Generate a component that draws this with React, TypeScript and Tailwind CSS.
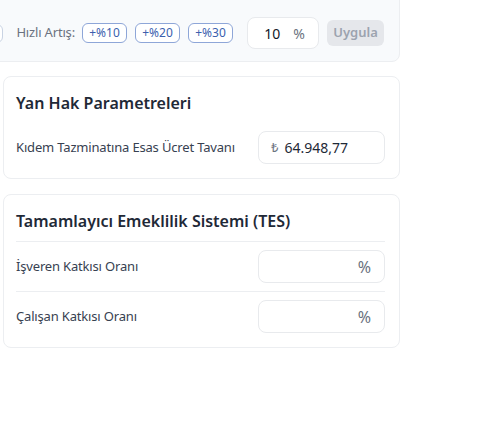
import React from 'react';

const font = { fontFamily: '"Noto Sans", "Liberation Sans", sans-serif' };

const chips = ['+%10', '+%20', '+%30'];

const PercentInput = () => (
    <div className="w-[127px] h-[33px] rounded-lg border border-[#e8eaed] bg-white flex items-center justify-end pr-[13px] shrink-0">
        <span className="text-[16px] text-[#6b7280]">%</span>
    </div>
);

export default function App() {
    return (
        <div className="min-h-[430px] bg-white overflow-hidden" style={font}>
            <div className="w-[397px] ml-[3px] flex flex-col">
                {/* quick raise bar, scrolled partly out of view */}
                <div className="-ml-[60px] w-[457px] -mt-[20px] pt-[36px] pb-[12px] pr-[15px] rounded-lg border border-[#eceef1] bg-[#f8fafc] flex items-center justify-end whitespace-nowrap">
                    <div className="w-[40px] h-[19px] rounded-md border border-[#c9d3e3] bg-white mr-[13px] shrink-0" />
                    <span className="text-[13px] tracking-[-0.17px] text-[#6b7280] mr-[7px] shrink-0">Hızlı Artış:</span>
                    <div className="flex gap-2 mr-[14px] shrink-0">
                        {chips.map(c => (
                            <button key={c} className="h-[20px] w-[45px] rounded-md border border-[#8ea6d8] bg-white text-[12px] text-[#3b5fae] leading-none">{c}</button>
                        ))}
                    </div>
                    <div className="w-[72px] h-[32px] rounded-lg border border-[#e8eaed] bg-white flex items-center justify-end pr-[13px] gap-[13px] mr-[8px] shrink-0">
                        <span className="text-[14px] text-[#111827]">10</span>
                        <span className="text-[14px] text-[#6b7280]">%</span>
                    </div>
                    <button className="w-[57px] h-[26px] rounded-md bg-[#e5e7eb] text-[13px] font-semibold text-[#9ca3af] shrink-0">Uygula</button>
                </div>

                <div className="mt-[14px] rounded-lg border border-[#eceef1] bg-white pt-[14px] pb-[14px] pl-[12px] pr-[14px]">
                    <h3 className="text-[16px] leading-6 font-semibold text-[#1f2937] mb-4">Yan Hak Parametreleri</h3>
                    <div className="flex items-center justify-between">
                        <span className="text-[13px] tracking-[-0.17px] text-[#374151]">Kıdem Tazminatına Esas Ücret Tavanı</span>
                        <div className="w-[127px] h-[33px] rounded-lg border border-[#e8eaed] bg-white flex items-center pl-[12px] gap-[6px]">
                            <span className="text-[13px] text-[#6b7280]">₺</span>
                            <span className="text-[14px] text-[#1f2937]">64.948,77</span>
                        </div>
                    </div>
                </div>

                <div className="mt-[15px] rounded-lg border border-[#eceef1] bg-white pt-[14px] pb-[14px] pl-[12px] pr-[14px]">
                    <h3 className="text-[16px] leading-6 font-semibold text-[#1f2937] pb-2">Tamamlayıcı Emeklilik Sistemi (TES)</h3>
                    <div className="flex items-center justify-between border-t border-[#eceef1] py-2">
                        <span className="text-[13px] tracking-[-0.17px] text-[#374151]">İşveren Katkısı Oranı</span>
                        <PercentInput />
                    </div>
                    <div className="flex items-center justify-between border-t border-[#eceef1] pt-2">
                        <span className="text-[13px] tracking-[-0.17px] text-[#374151]">Çalışan Katkısı Oranı</span>
                        <PercentInput />
                    </div>
                </div>
            </div>
        </div>
    );
}
